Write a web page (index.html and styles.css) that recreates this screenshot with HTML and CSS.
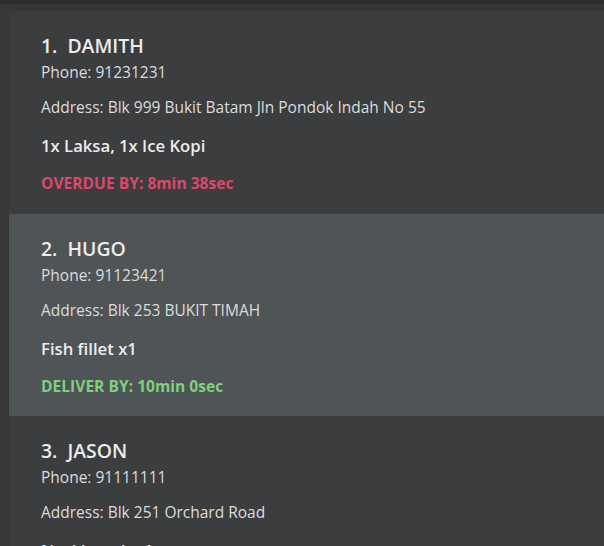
FILE: index.html
```html
<!DOCTYPE html>
<html>
<head>
<meta charset="utf-8">
<link rel="stylesheet" href="styles.css">
</head>
<body>
<div class="topbar"></div>
<div class="panel">
  <ul class="orders">
    <li class="card">
      <div class="title"><span class="idx">1.</span>DAMITH</div>
      <div class="phone">Phone: 91231231</div>
      <div class="address">Address: Blk 999 Bukit Batam Jln Pondok Indah No 55</div>
      <div class="items">1x Laksa, 1x Ice Kopi</div>
      <div class="status overdue">OVERDUE BY: 8min 38sec</div>
    </li>
    <li class="card selected">
      <div class="title"><span class="idx">2.</span>HUGO</div>
      <div class="phone">Phone: 91123421</div>
      <div class="address">Address: Blk 253 BUKIT TIMAH</div>
      <div class="items">Fish fillet x1</div>
      <div class="status ontime">DELIVER BY: 10min 0sec</div>
    </li>
    <li class="card">
      <div class="title"><span class="idx">3.</span>JASON</div>
      <div class="phone">Phone: 91111111</div>
      <div class="address">Address: Blk 251 Orchard Road</div>
      <div class="items">Nasi lemak x1</div>
    </li>
  </ul>
</div>
</body>
</html>
```
FILE: styles.css
```css
html, body {
  margin: 0;
  padding: 0;
  height: 100%;
  overflow: hidden;
}
body {
  background: #373737;
  font-family: "Open Sans", "Noto Sans", sans-serif;
  color: #e8e8e8;
}
.topbar {
  height: 4px;
  background: #2d2d2d;
}
.panel {
  padding: 7px 0 0 9px;
}
.orders {
  list-style: none;
  margin: 0;
  padding: 0;
}
.card {
  background: #3c3d3f;
  padding: 21px 32px 20px;
  height: 203px;
  box-sizing: border-box;
}
.card.selected {
  background: #4f5457;
  height: 202px;
}
.title {
  font-size: 19.4px;
  line-height: 27px;
  font-weight: 600;
  color: #ececec;
}
.idx {
  margin-right: 10px;
}
.phone, .address {
  font-size: 15.5px;
  line-height: 20px;
  color: #dcdcdc;
}
.phone { margin-top: 3px; }
.address { margin-top: 15px; }
.items {
  margin-top: 17px;
  font-size: 16.7px;
  line-height: 23px;
  font-weight: 600;
  color: #ececec;
}
.status {
  margin-top: 16px;
  font-size: 15.6px;
  line-height: 20px;
  font-weight: 700;
}
.overdue { color: #dc476b; }
.ontime { color: #7ecf7e; }
```
